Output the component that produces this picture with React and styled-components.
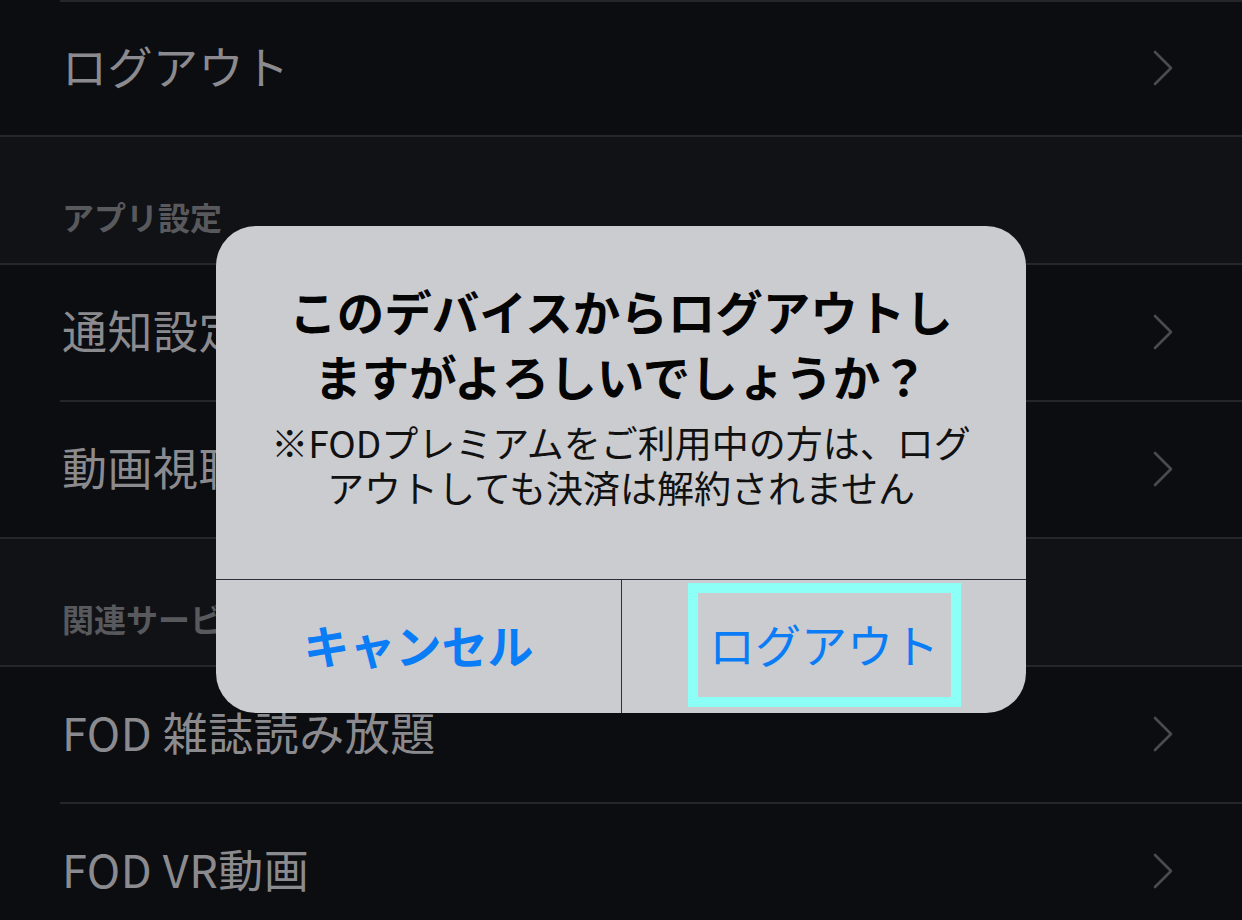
import React from 'react';
import styled, { createGlobalStyle } from 'styled-components';

const GlobalStyle = createGlobalStyle`
  html, body {
    margin: 0;
    padding: 0;
    background: #0c0d11;
  }
  body {
    font-family: "Noto Sans CJK JP", "Noto Sans", sans-serif;
  }
`;

const groups = [
  { rows: ['ログアウト'] },
  { title: 'アプリ設定', rows: ['通知設定', '動画視聴設定'] },
  { title: '関連サービス', rows: ['FOD 雑誌読み放題', 'FOD VR動画'] },
];

const Chevron = () => (
  <svg width="22" height="36" viewBox="0 0 22 36" fill="none">
    <polyline
      points="3,2 19,18 3,34"
      stroke="#4a4b4f"
      strokeWidth="2.6"
      strokeLinecap="round"
      strokeLinejoin="round"
    />
  </svg>
);

const App = () => {
  return (
    <Screen>
      <GlobalStyle />
      <List>
        <Separator inset />
        {groups.map((group, gi) => (
          <React.Fragment key={gi}>
            {group.title && (
              <>
                <SectionHeader>{group.title}</SectionHeader>
                <Separator />
              </>
            )}
            {group.rows.map((row, ri) => (
              <React.Fragment key={row}>
                <Row first={gi === 0}>
                  <RowLabel>{row}</RowLabel>
                  <Chevron />
                </Row>
                {gi < groups.length - 1 || ri < group.rows.length - 1 ? (
                  <Separator inset={ri < group.rows.length - 1} />
                ) : null}
              </React.Fragment>
            ))}
          </React.Fragment>
        ))}
      </List>

      <Alert>
        <AlertBody>
          <AlertTitle>
            <Line>このデバイスからログアウトし</Line>
            <Line>ますがよろしいでしょうか？</Line>
          </AlertTitle>
          <AlertMessage>
            <Line>※FODプレミアムをご利用中の方は、ログ</Line>
            <Line>アウトしても決済は解約されません</Line>
          </AlertMessage>
        </AlertBody>
        <AlertActions>
          <ActionButton bold>キャンセル</ActionButton>
          <ActionButton>
            <FocusRing>ログアウト</FocusRing>
          </ActionButton>
        </AlertActions>
      </Alert>
    </Screen>
  );
};

export default App;

const Screen = styled.div`
  position: relative;
  width: 1242px;
  height: 920px;
  overflow: hidden;
  background: #0c0d11;
`;

const List = styled.div`
  display: flex;
  flex-direction: column;
`;

const Separator = styled.div`
  height: 2px;
  margin-left: ${p => (p.inset ? '60px' : '0')};
  background: #25262a;
  flex-shrink: 0;
`;

const Row = styled.div`
  display: flex;
  align-items: center;
  justify-content: space-between;
  height: ${p => (p.first ? '133px' : '135px')};
  padding: 0 68px 6px 62px;
  box-sizing: border-box;
  background: #0c0d11;
  flex-shrink: 0;

  svg {
    margin-top: 4px;
  }
`;

const RowLabel = styled.span`
  font-size: 45px;
  color: #8b8b8f;
  letter-spacing: 0.5px;
`;

const SectionHeader = styled.div`
  display: flex;
  align-items: flex-end;
  height: 126px;
  padding: 0 0 24px 62px;
  box-sizing: border-box;
  background: #111216;
  font-size: 32px;
  font-weight: 700;
  color: #58595d;
  flex-shrink: 0;
`;

const Alert = styled.div`
  position: absolute;
  left: 216px;
  top: 226px;
  width: 810px;
  border-radius: 40px;
  background: #cbccd0;
  overflow: hidden;
  display: flex;
  flex-direction: column;
`;

const AlertBody = styled.div`
  display: flex;
  flex-direction: column;
  align-items: center;
  padding: 52px 30px 69px;
  text-align: center;
  border-bottom: 1px solid #2d2e3a;
`;

const Line = styled.span`
  display: block;
  white-space: nowrap;
`;

const AlertTitle = styled.div`
  font-size: 47.5px;
  line-height: 65px;
  font-weight: 700;
  color: #050505;
`;

const AlertMessage = styled.div`
  margin-top: 12px;
  font-size: 37px;
  line-height: 45px;
  color: #111111;
`;

const AlertActions = styled.div`
  display: grid;
  grid-template-columns: 1fr 1fr;
  height: 133px;

  & > * + * {
    border-left: 1px solid #2d2e3a;
  }
`;

const ActionButton = styled.div`
  display: flex;
  align-items: center;
  justify-content: center;
  padding-bottom: 6px;
  font-size: 46px;
  font-weight: ${p => (p.bold ? 700 : 400)};
  color: #0a7cf6;
`;

const FocusRing = styled.span`
  display: flex;
  align-items: center;
  justify-content: center;
  width: 273px;
  height: 124px;
  margin-top: 2px;
  padding-bottom: 4px;
  box-sizing: border-box;
  border: 10px solid #8cfff7;
`;
